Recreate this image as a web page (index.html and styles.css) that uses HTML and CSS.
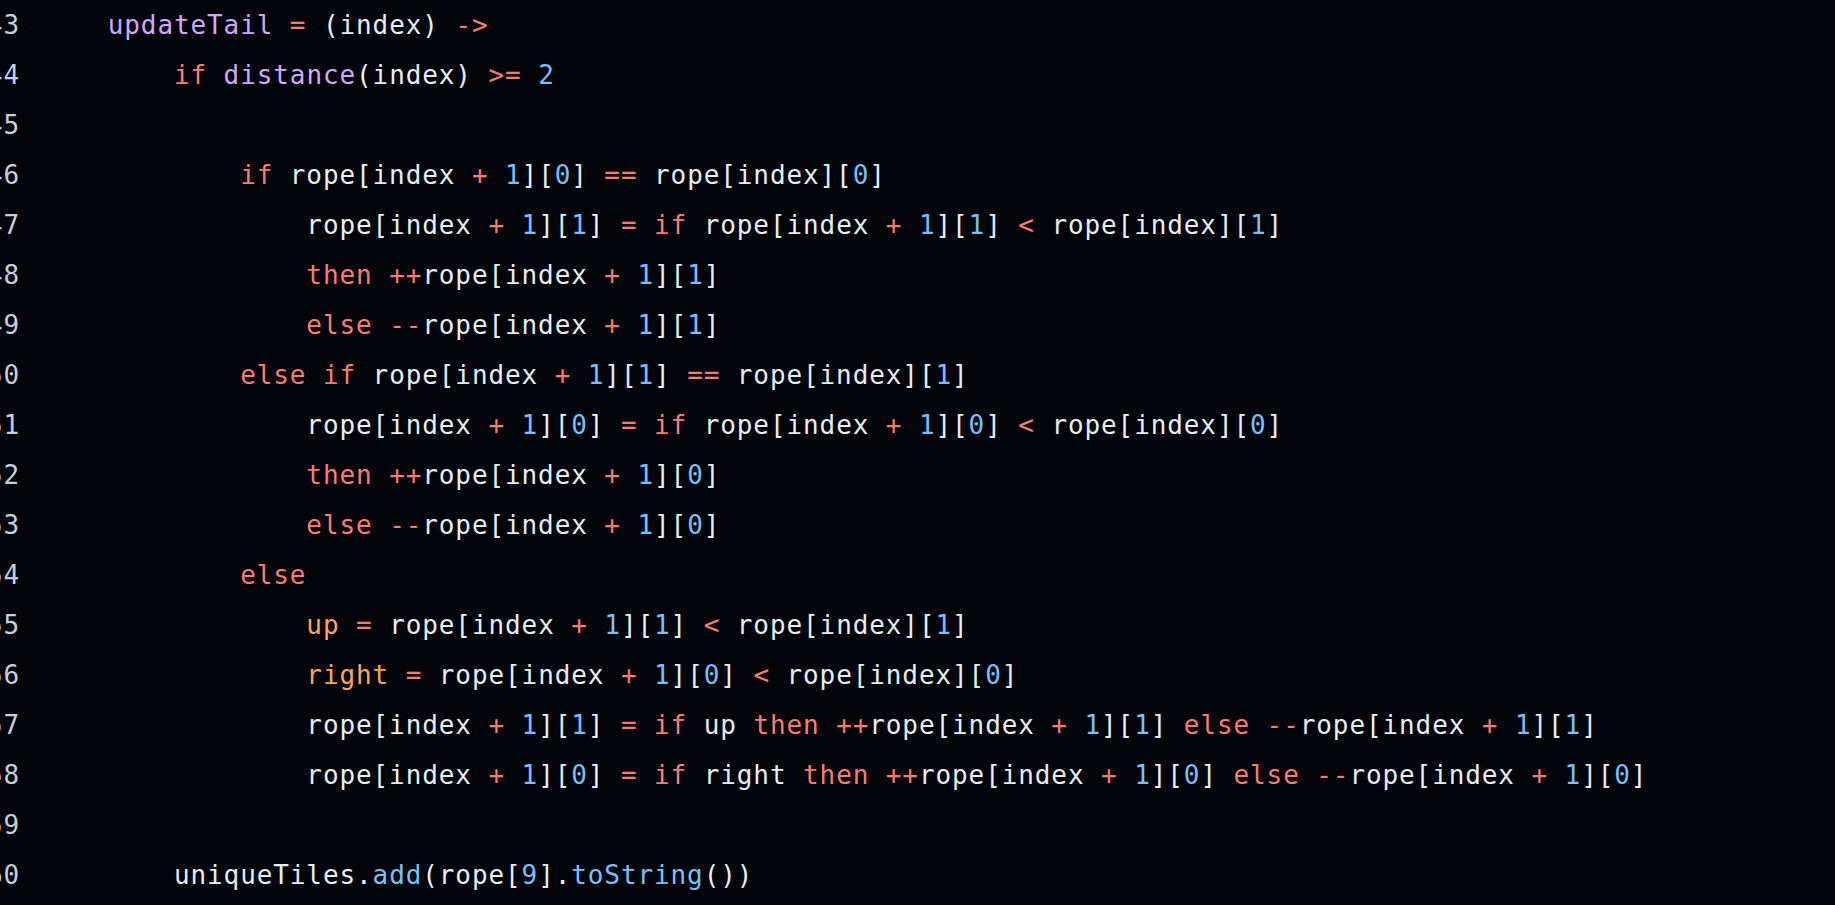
FILE: index.html
```html
<!DOCTYPE html>
<html>
<head>
<meta charset="utf-8">
<link rel="stylesheet" href="styles.css">
</head>
<body>
<div class="editor">
  <div class="gutter">
    <div class="ln">43</div><div class="ln">44</div><div class="ln">45</div><div class="ln">46</div><div class="ln">47</div><div class="ln">48</div><div class="ln">49</div><div class="ln">50</div><div class="ln">51</div><div class="ln">52</div><div class="ln">53</div><div class="ln">54</div><div class="ln">55</div><div class="ln">56</div><div class="ln">57</div><div class="ln">58</div><div class="ln">59</div><div class="ln">60</div>
  </div>
  <div class="code">
<div class="line">    <span class="fn">updateTail</span> <span class="kw">=</span> (index) <span class="kw">-&gt;</span></div>
<div class="line">        <span class="kw">if</span> <span class="fn">distance</span>(index) <span class="kw">&gt;=</span> <span class="num">2</span></div>
<div class="line"> </div>
<div class="line">            <span class="kw">if</span> rope[index <span class="kw">+</span> <span class="num">1</span>][<span class="num">0</span>] <span class="kw">==</span> rope[index][<span class="num">0</span>]</div>
<div class="line">                rope[index <span class="kw">+</span> <span class="num">1</span>][<span class="num">1</span>] <span class="kw">=</span> <span class="kw">if</span> rope[index <span class="kw">+</span> <span class="num">1</span>][<span class="num">1</span>] <span class="kw">&lt;</span> rope[index][<span class="num">1</span>]</div>
<div class="line">                <span class="kw">then</span> <span class="kw">++</span>rope[index <span class="kw">+</span> <span class="num">1</span>][<span class="num">1</span>]</div>
<div class="line">                <span class="kw">else</span> <span class="kw">--</span>rope[index <span class="kw">+</span> <span class="num">1</span>][<span class="num">1</span>]</div>
<div class="line">            <span class="kw">else</span> <span class="kw">if</span> rope[index <span class="kw">+</span> <span class="num">1</span>][<span class="num">1</span>] <span class="kw">==</span> rope[index][<span class="num">1</span>]</div>
<div class="line">                rope[index <span class="kw">+</span> <span class="num">1</span>][<span class="num">0</span>] <span class="kw">=</span> <span class="kw">if</span> rope[index <span class="kw">+</span> <span class="num">1</span>][<span class="num">0</span>] <span class="kw">&lt;</span> rope[index][<span class="num">0</span>]</div>
<div class="line">                <span class="kw">then</span> <span class="kw">++</span>rope[index <span class="kw">+</span> <span class="num">1</span>][<span class="num">0</span>]</div>
<div class="line">                <span class="kw">else</span> <span class="kw">--</span>rope[index <span class="kw">+</span> <span class="num">1</span>][<span class="num">0</span>]</div>
<div class="line">            <span class="kw">else</span></div>
<div class="line">                <span class="var">up</span> <span class="kw">=</span> rope[index <span class="kw">+</span> <span class="num">1</span>][<span class="num">1</span>] <span class="kw">&lt;</span> rope[index][<span class="num">1</span>]</div>
<div class="line">                <span class="var">right</span> <span class="kw">=</span> rope[index <span class="kw">+</span> <span class="num">1</span>][<span class="num">0</span>] <span class="kw">&lt;</span> rope[index][<span class="num">0</span>]</div>
<div class="line">                rope[index <span class="kw">+</span> <span class="num">1</span>][<span class="num">1</span>] <span class="kw">=</span> <span class="kw">if</span> up <span class="kw">then</span> <span class="kw">++</span>rope[index <span class="kw">+</span> <span class="num">1</span>][<span class="num">1</span>] <span class="kw">else</span> <span class="kw">--</span>rope[index <span class="kw">+</span> <span class="num">1</span>][<span class="num">1</span>]</div>
<div class="line">                rope[index <span class="kw">+</span> <span class="num">1</span>][<span class="num">0</span>] <span class="kw">=</span> <span class="kw">if</span> right <span class="kw">then</span> <span class="kw">++</span>rope[index <span class="kw">+</span> <span class="num">1</span>][<span class="num">0</span>] <span class="kw">else</span> <span class="kw">--</span>rope[index <span class="kw">+</span> <span class="num">1</span>][<span class="num">0</span>]</div>
<div class="line"> </div>
<div class="line">        uniqueTiles.<span class="num">add</span>(rope[<span class="num">9</span>].<span class="num">toString</span>())</div>
  </div>
</div>
</body>
</html>
```
FILE: styles.css
```css
html, body {
  margin: 0;
  padding: 0;
  background: #010409;
  height: 100%;
  overflow: hidden;
}

.editor {
  display: flex;
  margin-left: -13px;
  font-family: "DejaVu Sans Mono", "Liberation Mono", monospace;
  font-size: 26px;
  letter-spacing: 0.9px;
  line-height: 50px;
  color: #e6edf3;
}

.gutter {
  width: 33px;
  flex: none;
  text-align: right;
  color: #c6cfdb;
}

.ln {
  height: 50px;
}

.code {
  padding-left: 21.5px;
}

.line {
  height: 50px;
  white-space: pre;
}

.fn { color: #d2a8ff; }
.kw { color: #ff7b72; }
.num { color: #79c0ff; }
.var { color: #ffa657; }
```
